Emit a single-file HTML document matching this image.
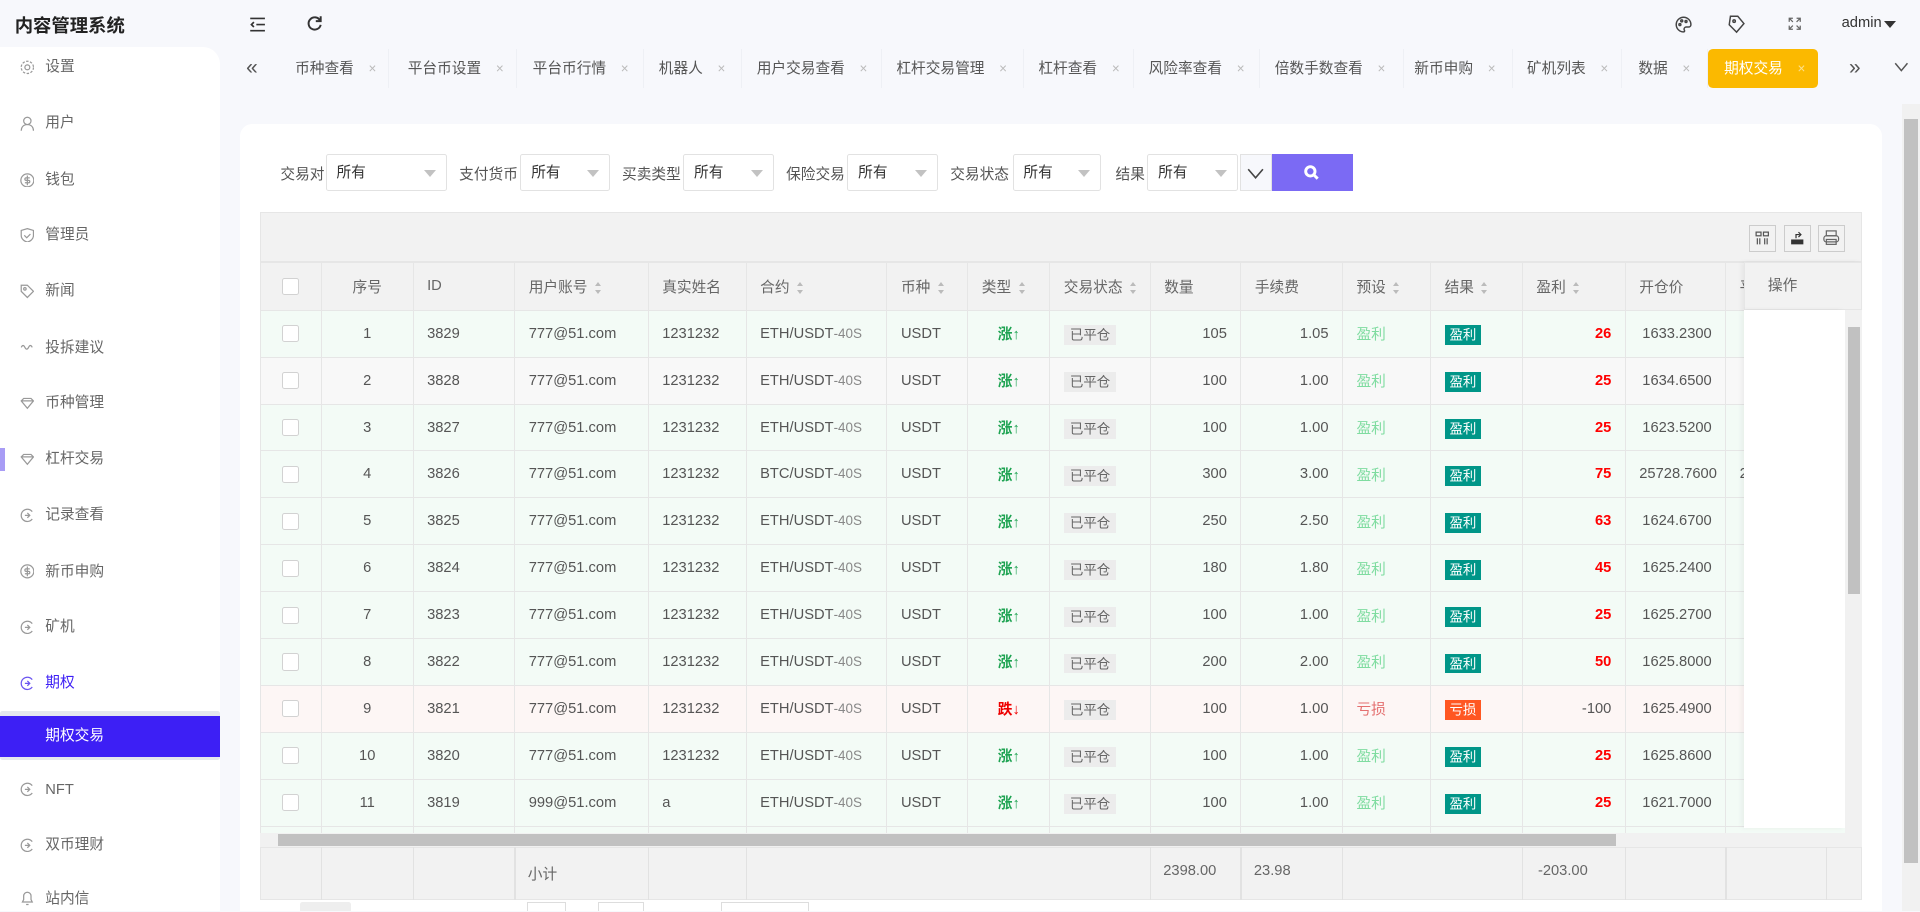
<!DOCTYPE html>
<html><head><meta charset="utf-8">
<style>
*{box-sizing:border-box;margin:0;padding:0}
html,body{width:1920px;height:912px;overflow:hidden;background:#f7f8fc}
#root{zoom:1.22449;width:1568px;height:744px;position:relative;font-family:"Liberation Sans","Noto Sans CJK SC",sans-serif;font-size:12px;color:#555;overflow:hidden}
.abs{position:absolute}
.title{left:12px;top:10px;font-size:15px;font-weight:bold;color:#222}
.side{left:0;top:38px;width:180px;height:706px;background:#fff;border-top-right-radius:14px}
.mi{position:absolute;left:0;width:180px;height:20px;line-height:20px;color:#666;font-size:12px}
.mi .ic{position:absolute;left:16px;top:4px;width:12px;height:12px}
.mi span{position:absolute;left:37px}
.tab{position:absolute;top:40px;height:32px;line-height:32px;font-size:12px;color:#555;border-right:1px solid #eef0f5}
.tab b{font-weight:normal;color:#bbb;margin-left:12px;font-size:11px}
.card{left:196px;top:101px;width:1341px;height:700px;background:#fff;border-radius:10px}
.lbl{position:absolute;top:133px;font-size:12px;color:#555}
.sel{position:absolute;top:126px;height:30px;border:1px solid #e2e2e2;border-radius:2px;background:#fff;font-size:12px;line-height:30px;padding-left:8px;color:#333}
.sel i{position:absolute;right:8px;top:12px;border-left:5px solid transparent;border-right:5px solid transparent;border-top:6px solid #c2c2c2}
table{border-collapse:collapse;table-layout:fixed}
td,th{border:1px solid #e6e6e6;font-weight:normal;font-size:12px;color:#555;padding:0 11px;white-space:nowrap;overflow:hidden;text-align:left}
th{height:39px;background:#f2f2f2;color:#666}
td{height:38.3px}
.c{text-align:center}.r{text-align:right}
.g td{background:#f3fbf6}.w td{background:#f8f8f8}.p td{background:#fdf6f5}
.sm{color:#888;font-size:11px}
.up{color:#1ea352;font-weight:bold}.dn{color:#e00;font-weight:bold}
.st{background:#ececec;color:#666;padding:2px 5px;font-size:11px}
.ok{color:#7fdca0}.ls{color:#e46f6f}
.bk{background:#009688;color:#fff;padding:2px 4px;font-size:11px}
.bl{background:#ff5722;color:#fff;padding:2px 4px;font-size:11px}
.red{color:#f00;font-weight:bold}
.so{display:inline-block;width:6px;height:10px;vertical-align:middle;margin-left:6px;position:relative}
.so:before{content:"";position:absolute;top:0;left:0;border-left:3px solid transparent;border-right:3px solid transparent;border-bottom:4px solid #bbb}
.so:after{content:"";position:absolute;bottom:0;left:0;border-left:3px solid transparent;border-right:3px solid transparent;border-top:4px solid #bbb}
.cb{display:inline-block;width:14px;height:14px;border:1px solid #d2d2d2;background:#fff;border-radius:2px;vertical-align:middle}
.tb{position:absolute;top:184px;width:22px;height:22px;border:1px solid #ccc;background:#f2f2f2}
</style></head><body><div id="root">
<div class="abs title">内容管理系统</div>
<svg class="abs" style="left:203px;top:13px" width="14" height="14" viewBox="0 0 14 14" fill="none" stroke="#333" stroke-width="1.4"><path d="M1 2h12M6 7h7M1 12h12M4 5L2 7l2 2"/></svg>
<svg class="abs" style="left:250px;top:12px" width="14" height="14" viewBox="0 0 14 14" fill="none" stroke="#333" stroke-width="1.6"><path d="M11.5 4.5A5 5 0 1 0 12 8"/><path d="M12 1v4H8"/></svg>
<svg class="abs" style="left:1368px;top:13px" width="14" height="14" viewBox="0 0 14 14" fill="none" stroke="#444" stroke-width="1.2"><path d="M7 1a6 6 0 1 0 0 12c1 0 1-1 .5-1.8S8 9 9 9h2a2 2 0 0 0 2-2A6 6 0 0 0 7 1z"/><circle cx="4" cy="7" r=".8"/><circle cx="5.5" cy="4" r=".8"/><circle cx="9" cy="4.5" r=".8"/></svg>
<svg class="abs" style="left:1411px;top:12px" width="14" height="16" viewBox="0 0 14 16" fill="none" stroke="#444" stroke-width="1.2"><path d="M2 1h6l5 6-6 7-6-6z"/><circle cx="5" cy="5" r="1"/></svg>
<svg class="abs" style="left:1460px;top:14px" width="11" height="11" viewBox="0 0 11 11" fill="none" stroke="#666" stroke-width="1"><path d="M1 4V1h3M7 1h3v3M10 7v3H7M4 10H1V7M1 1l3 3M10 1L7 4M10 10L7 7M1 10l3-3"/></svg>
<div class="abs" style="left:1504px;top:12px;font-size:12px;color:#333">admin</div>
<div class="abs" style="left:1539px;top:17px;border-left:5px solid transparent;border-right:5px solid transparent;border-top:6px solid #333"></div>
<div class="abs side"></div>
<div class="abs" style="left:0;top:366px;width:4px;height:19px;background:#a89cf5"></div>
<div class="abs" style="left:0;top:581px;width:180px;height:40px;background:#e5e7ee;border-radius:2px"></div>
<div class="abs" style="left:0;top:585px;width:180px;height:33px;background:#3d1ff5"></div>
<div class="mi" style="top:45px"><svg class="ic" viewBox="0 0 12 12" fill="none" stroke="#999"><circle cx="6" cy="6" r="2"/><circle cx="6" cy="6" r="5" stroke-dasharray="2 1.2"/></svg><span>设置</span></div>
<div class="mi" style="top:91px"><svg class="ic" viewBox="0 0 12 12" fill="none" stroke="#999"><circle cx="6" cy="4" r="3"/><path d="M1 12c0-3 2-5 5-5s5 2 5 5"/></svg><span>用户</span></div>
<div class="mi" style="top:137px"><svg class="ic" viewBox="0 0 12 12" fill="none" stroke="#999"><circle cx="6" cy="6" r="5.3"/><path d="M6 2v8M8 4H5a1 1 0 0 0 0 2h2a1 1 0 0 1 0 2H4"/></svg><span>钱包</span></div>
<div class="mi" style="top:182px"><svg class="ic" viewBox="0 0 12 12" fill="none" stroke="#999"><path d="M6 .5L11 2v4c0 3-2.5 5-5 5.5C3.5 11 1 9 1 6V2z"/><path d="M3.5 6l2 2 3-3"/></svg><span>管理员</span></div>
<div class="mi" style="top:228px"><svg class="ic" viewBox="0 0 12 12" fill="none" stroke="#999"><path d="M1 1h5l5 5-5 5-5-5z"/><circle cx="4" cy="4" r="1"/></svg><span>新闻</span></div>
<div class="mi" style="top:274px"><svg class="ic" viewBox="0 0 12 12" fill="none" stroke="#999"><path d="M1 6c1-2 2-2 3 0s2 2 3 0 2-2 3 0"/></svg><span>投拆建议</span></div>
<div class="mi" style="top:319px"><svg class="ic" viewBox="0 0 12 12" fill="none" stroke="#999"><path d="M1 4l2-2h6l2 2-5 6z M1 4h10"/></svg><span>币种管理</span></div>
<div class="mi" style="top:365px"><svg class="ic" viewBox="0 0 12 12" fill="none" stroke="#999"><path d="M1 4l2-2h6l2 2-5 6z M1 4h10"/></svg><span>杠杆交易</span></div>
<div class="mi" style="top:411px"><svg class="ic" viewBox="0 0 12 12" fill="none" stroke="#999"><path d="M10 3A5 5 0 1 0 10 9"/><path d="M4 6h4M6 4l2 2-2 2"/></svg><span>记录查看</span></div>
<div class="mi" style="top:457px"><svg class="ic" viewBox="0 0 12 12" fill="none" stroke="#999"><circle cx="6" cy="6" r="5.3"/><path d="M6 2v8M8 4H5a1 1 0 0 0 0 2h2a1 1 0 0 1 0 2H4"/></svg><span>新币申购</span></div>
<div class="mi" style="top:502px"><svg class="ic" viewBox="0 0 12 12" fill="none" stroke="#999"><path d="M10 3A5 5 0 1 0 10 9"/><path d="M4 6h4M6 4l2 2-2 2"/></svg><span>矿机</span></div>
<div class="mi" style="top:548px;color:#3d1ff5"><svg class="ic" viewBox="0 0 12 12" fill="none" stroke="#6b55f0"><path d="M10 3A5 5 0 1 0 10 9"/><path d="M4 6h4M6 4l2 2-2 2"/></svg><span>期权</span></div>
<div class="mi" style="top:591px;color:#fff"><span>期权交易</span></div>
<div class="mi" style="top:635px"><svg class="ic" viewBox="0 0 12 12" fill="none" stroke="#999"><path d="M10 3A5 5 0 1 0 10 9"/><path d="M4 6h4M6 4l2 2-2 2"/></svg><span>NFT</span></div>
<div class="mi" style="top:680px"><svg class="ic" viewBox="0 0 12 12" fill="none" stroke="#999"><path d="M10 3A5 5 0 1 0 10 9"/><path d="M4 6h4M6 4l2 2-2 2"/></svg><span>双币理财</span></div>
<div class="mi" style="top:724px"><svg class="ic" viewBox="0 0 12 12" fill="none" stroke="#999"><path d="M2 9h8L9 7V4a3 3 0 0 0-6 0v3zM5 11h2"/></svg><span>站内信</span></div>
<div class="abs" style="left:201px;top:46px;font-size:17px;color:#555">«</div>
<div class="tab" style="left:225px;width:93px;padding-left:16px">币种查看<b>×</b></div>
<div class="tab" style="left:318px;width:104px;padding-left:15px">平台币设置<b>×</b></div>
<div class="tab" style="left:422px;width:104px;padding-left:13px">平台币行情<b>×</b></div>
<div class="tab" style="left:526px;width:80px;padding-left:12px">机器人<b>×</b></div>
<div class="tab" style="left:606px;width:114px;padding-left:12px">用户交易查看<b>×</b></div>
<div class="tab" style="left:720px;width:116px;padding-left:12px">杠杆交易管理<b>×</b></div>
<div class="tab" style="left:836px;width:90px;padding-left:12px">杠杆查看<b>×</b></div>
<div class="tab" style="left:926px;width:103px;padding-left:12px">风险率查看<b>×</b></div>
<div class="tab" style="left:1029px;width:118px;padding-left:12px">倍数手数查看<b>×</b></div>
<div class="tab" style="left:1147px;width:89px;padding-left:8px">新币申购<b>×</b></div>
<div class="tab" style="left:1236px;width:89px;padding-left:11px">矿机列表<b>×</b></div>
<div class="tab" style="left:1325px;width:70px;padding-left:13px">数据<b>×</b></div>
<div class="tab" style="left:1395px;width:90px;padding-left:13px;background:#fbb900;color:#fff;border-radius:4px;border:none">期权交易<b style="color:#fde08a">×</b></div>
<div class="abs" style="left:1510px;top:46px;font-size:17px;color:#555">»</div>
<svg class="abs" style="left:1547px;top:51px" width="12" height="8" viewBox="0 0 12 8" fill="none" stroke="#555" stroke-width="1.2"><path d="M1 1l5 6 5-6"/></svg>
<div class="abs card"></div>
<div class="lbl" style="left:229px">交易对</div><div class="sel" style="left:266px;width:99px">所有<i></i></div>
<div class="lbl" style="left:375px">支付货币</div><div class="sel" style="left:425px;width:73px">所有<i></i></div>
<div class="lbl" style="left:508px">买卖类型</div><div class="sel" style="left:558px;width:74px">所有<i></i></div>
<div class="lbl" style="left:642px">保险交易</div><div class="sel" style="left:692px;width:74px">所有<i></i></div>
<div class="lbl" style="left:776px">交易状态</div><div class="sel" style="left:827px;width:72px">所有<i></i></div>
<div class="lbl" style="left:911px">结果</div><div class="sel" style="left:937px;width:74px">所有<i></i></div>
<div class="abs" style="left:1013px;top:126px;width:26px;height:30px;border:1px solid #e2e2e2;background:#f7f8fc"></div>
<svg class="abs" style="left:1018px;top:137px" width="14" height="9" viewBox="0 0 14 9" fill="none" stroke="#444" stroke-width="1.3"><path d="M1 1l6 7 6-7"/></svg>
<div class="abs" style="left:1039px;top:126px;width:66px;height:30px;background:#7b6af4"></div>
<svg class="abs" style="left:1064px;top:134px" width="14" height="14" viewBox="0 0 14 14" fill="none" stroke="#fff" stroke-width="2.4"><circle cx="6" cy="6" r="3.8"/><path d="M9 9l3 3"/></svg>
<div class="abs" style="left:212px;top:173px;width:1309px;height:41px;background:#f2f2f2;border:1px solid #e6e6e6"></div>
<div class="tb" style="left:1428px"><svg width="20" height="20" viewBox="0 0 20 20" fill="none" stroke="#555"><rect x="5" y="5" width="4" height="3"/><rect x="11" y="5" width="4" height="3"/><path d="M6 10v5M8 10v5M12 10v5M14 10v5"/></svg></div>
<div class="tb" style="left:1457px"><svg width="20" height="20" viewBox="0 0 20 20"><path d="M5 11h10v4H5z" fill="#333"/><path d="M9 10V7h3M11 5l2 2-2 2" fill="none" stroke="#333"/></svg></div>
<div class="tb" style="left:1485px"><svg width="20" height="20" viewBox="0 0 20 20" fill="none" stroke="#666"><rect x="6" y="4" width="8" height="4"/><rect x="4" y="8" width="12" height="5" rx="2"/><rect x="6" y="11" width="8" height="4"/></svg></div>
<div class="abs" style="left:212px;top:214px;width:1295px;height:466px;overflow:hidden;background:#fff">
<table style="width:1395px">
<colgroup><col style="width:50px"><col style="width:75px"><col style="width:83px"><col style="width:109px"><col style="width:80px"><col style="width:115px"><col style="width:66px"><col style="width:67px"><col style="width:82px"><col style="width:74px"><col style="width:83px"><col style="width:72px"><col style="width:75px"><col style="width:84px"><col style="width:82px"><col style="width:198px"></colgroup>
<tr><th class="c"><span class="cb"></span></th><th class="c">序号</th><th>ID</th><th>用户账号<i class="so"></i></th><th>真实姓名</th><th>合约<i class="so"></i></th><th>币种<i class="so"></i></th><th>类型<i class="so"></i></th><th>交易状态<i class="so"></i></th><th>数量</th><th>手续费</th><th>预设<i class="so"></i></th><th>结果<i class="so"></i></th><th>盈利<i class="so"></i></th><th>开仓价</th><th>平</th></tr>
<tr class="g"><td class="c"><span class="cb"></span></td><td class="c">1</td><td>3829</td><td>777@51.com</td><td>1231232</td><td>ETH/USDT<span class="sm">-40S</span></td><td>USDT</td><td class="c"><span class="up">涨↑</span></td><td><span class="st">已平仓</span></td><td class="r">105</td><td class="r">1.05</td><td><span class="ok">盈利</span></td><td><span class="bk">盈利</span></td><td class="r"><span class="red">26</span></td><td class="r">1633.2300</td><td></td></tr>
<tr class="w"><td class="c"><span class="cb"></span></td><td class="c">2</td><td>3828</td><td>777@51.com</td><td>1231232</td><td>ETH/USDT<span class="sm">-40S</span></td><td>USDT</td><td class="c"><span class="up">涨↑</span></td><td><span class="st">已平仓</span></td><td class="r">100</td><td class="r">1.00</td><td><span class="ok">盈利</span></td><td><span class="bk">盈利</span></td><td class="r"><span class="red">25</span></td><td class="r">1634.6500</td><td></td></tr>
<tr class="g"><td class="c"><span class="cb"></span></td><td class="c">3</td><td>3827</td><td>777@51.com</td><td>1231232</td><td>ETH/USDT<span class="sm">-40S</span></td><td>USDT</td><td class="c"><span class="up">涨↑</span></td><td><span class="st">已平仓</span></td><td class="r">100</td><td class="r">1.00</td><td><span class="ok">盈利</span></td><td><span class="bk">盈利</span></td><td class="r"><span class="red">25</span></td><td class="r">1623.5200</td><td></td></tr>
<tr class="g"><td class="c"><span class="cb"></span></td><td class="c">4</td><td>3826</td><td>777@51.com</td><td>1231232</td><td>BTC/USDT<span class="sm">-40S</span></td><td>USDT</td><td class="c"><span class="up">涨↑</span></td><td><span class="st">已平仓</span></td><td class="r">300</td><td class="r">3.00</td><td><span class="ok">盈利</span></td><td><span class="bk">盈利</span></td><td class="r"><span class="red">75</span></td><td class="r">25728.7600</td><td>2</td></tr>
<tr class="g"><td class="c"><span class="cb"></span></td><td class="c">5</td><td>3825</td><td>777@51.com</td><td>1231232</td><td>ETH/USDT<span class="sm">-40S</span></td><td>USDT</td><td class="c"><span class="up">涨↑</span></td><td><span class="st">已平仓</span></td><td class="r">250</td><td class="r">2.50</td><td><span class="ok">盈利</span></td><td><span class="bk">盈利</span></td><td class="r"><span class="red">63</span></td><td class="r">1624.6700</td><td></td></tr>
<tr class="g"><td class="c"><span class="cb"></span></td><td class="c">6</td><td>3824</td><td>777@51.com</td><td>1231232</td><td>ETH/USDT<span class="sm">-40S</span></td><td>USDT</td><td class="c"><span class="up">涨↑</span></td><td><span class="st">已平仓</span></td><td class="r">180</td><td class="r">1.80</td><td><span class="ok">盈利</span></td><td><span class="bk">盈利</span></td><td class="r"><span class="red">45</span></td><td class="r">1625.2400</td><td></td></tr>
<tr class="g"><td class="c"><span class="cb"></span></td><td class="c">7</td><td>3823</td><td>777@51.com</td><td>1231232</td><td>ETH/USDT<span class="sm">-40S</span></td><td>USDT</td><td class="c"><span class="up">涨↑</span></td><td><span class="st">已平仓</span></td><td class="r">100</td><td class="r">1.00</td><td><span class="ok">盈利</span></td><td><span class="bk">盈利</span></td><td class="r"><span class="red">25</span></td><td class="r">1625.2700</td><td></td></tr>
<tr class="g"><td class="c"><span class="cb"></span></td><td class="c">8</td><td>3822</td><td>777@51.com</td><td>1231232</td><td>ETH/USDT<span class="sm">-40S</span></td><td>USDT</td><td class="c"><span class="up">涨↑</span></td><td><span class="st">已平仓</span></td><td class="r">200</td><td class="r">2.00</td><td><span class="ok">盈利</span></td><td><span class="bk">盈利</span></td><td class="r"><span class="red">50</span></td><td class="r">1625.8000</td><td></td></tr>
<tr class="p"><td class="c"><span class="cb"></span></td><td class="c">9</td><td>3821</td><td>777@51.com</td><td>1231232</td><td>ETH/USDT<span class="sm">-40S</span></td><td>USDT</td><td class="c"><span class="dn">跌↓</span></td><td><span class="st">已平仓</span></td><td class="r">100</td><td class="r">1.00</td><td><span class="ls">亏损</span></td><td><span class="bl">亏损</span></td><td class="r">-100</td><td class="r">1625.4900</td><td></td></tr>
<tr class="g"><td class="c"><span class="cb"></span></td><td class="c">10</td><td>3820</td><td>777@51.com</td><td>1231232</td><td>ETH/USDT<span class="sm">-40S</span></td><td>USDT</td><td class="c"><span class="up">涨↑</span></td><td><span class="st">已平仓</span></td><td class="r">100</td><td class="r">1.00</td><td><span class="ok">盈利</span></td><td><span class="bk">盈利</span></td><td class="r"><span class="red">25</span></td><td class="r">1625.8600</td><td></td></tr>
<tr class="g"><td class="c"><span class="cb"></span></td><td class="c">11</td><td>3819</td><td>999@51.com</td><td>a</td><td>ETH/USDT<span class="sm">-40S</span></td><td>USDT</td><td class="c"><span class="up">涨↑</span></td><td><span class="st">已平仓</span></td><td class="r">100</td><td class="r">1.00</td><td><span class="ok">盈利</span></td><td><span class="bk">盈利</span></td><td class="r"><span class="red">25</span></td><td class="r">1621.7000</td><td></td></tr>
<tr class="g"><td></td><td></td><td></td><td></td><td></td><td></td><td></td><td></td><td></td><td></td><td></td><td></td><td></td><td></td><td></td><td></td></tr>
</table></div>
<div class="abs" style="left:1424px;top:214px;width:97px;height:39px;background:#f2f2f2;border:1px solid #e6e6e6;box-shadow:-2px 0 4px rgba(0,0,0,.05);line-height:38px;padding-left:19px;color:#666">操作</div>
<div class="abs" style="left:1424px;top:253px;width:83px;height:423px;background:#fff;box-shadow:-2px 0 4px rgba(0,0,0,.05)"></div>
<div class="abs" style="left:1507px;top:253px;width:14px;height:427px;background:#f1f1f1"></div>
<div class="abs" style="left:1509px;top:267px;width:10px;height:218px;background:#c1c1c1"></div>
<div class="abs" style="left:212px;top:680px;width:1309px;height:12px;background:#f1f1f1"></div>
<div class="abs" style="left:227px;top:681px;width:1093px;height:10px;background:#c1c1c1"></div>
<div class="abs" style="left:212px;top:692px;width:1309px;height:43px;background:#f2f2f2;border:1px solid #e6e6e6"></div>
<div class="abs" style="left:262px;top:692px;width:1px;height:43px;background:#e2e2e2"></div>
<div class="abs" style="left:337px;top:692px;width:1px;height:43px;background:#e2e2e2"></div>
<div class="abs" style="left:420px;top:692px;width:1px;height:43px;background:#e2e2e2"></div>
<div class="abs" style="left:529px;top:692px;width:1px;height:43px;background:#e2e2e2"></div>
<div class="abs" style="left:609px;top:692px;width:1px;height:43px;background:#e2e2e2"></div>
<div class="abs" style="left:939px;top:692px;width:1px;height:43px;background:#e2e2e2"></div>
<div class="abs" style="left:1013px;top:692px;width:1px;height:43px;background:#e2e2e2"></div>
<div class="abs" style="left:1096px;top:692px;width:1px;height:43px;background:#e2e2e2"></div>
<div class="abs" style="left:1243px;top:692px;width:1px;height:43px;background:#e2e2e2"></div>
<div class="abs" style="left:1327px;top:692px;width:1px;height:43px;background:#e2e2e2"></div>
<div class="abs" style="left:1409px;top:692px;width:1px;height:43px;background:#e2e2e2"></div>
<div class="abs" style="left:1491px;top:692px;width:1px;height:43px;background:#e2e2e2"></div>
<div class="abs" style="left:431px;top:705px;color:#666">小计</div>
<div class="abs" style="left:950px;top:705px;color:#666">2398.00</div>
<div class="abs" style="left:1024px;top:705px;color:#666">23.98</div>
<div class="abs" style="left:1256px;top:705px;color:#666">-203.00</div>
<div class="abs" style="left:245px;top:737px;width:42px;height:20px;background:#eee;border-radius:2px"></div>
<div class="abs" style="left:430px;top:737px;width:32px;height:20px;border:1px solid #ddd"></div>
<div class="abs" style="left:488px;top:737px;width:38px;height:20px;border:1px solid #ddd"></div>
<div class="abs" style="left:589px;top:737px;width:72px;height:20px;border:1px solid #ddd"></div>
<div class="abs" style="left:1553px;top:85px;width:15px;height:660px;background:#f1f1f1"></div>
<div class="abs" style="left:1555px;top:97px;width:11px;height:608px;background:#c1c1c1"></div>
</div></body></html>
